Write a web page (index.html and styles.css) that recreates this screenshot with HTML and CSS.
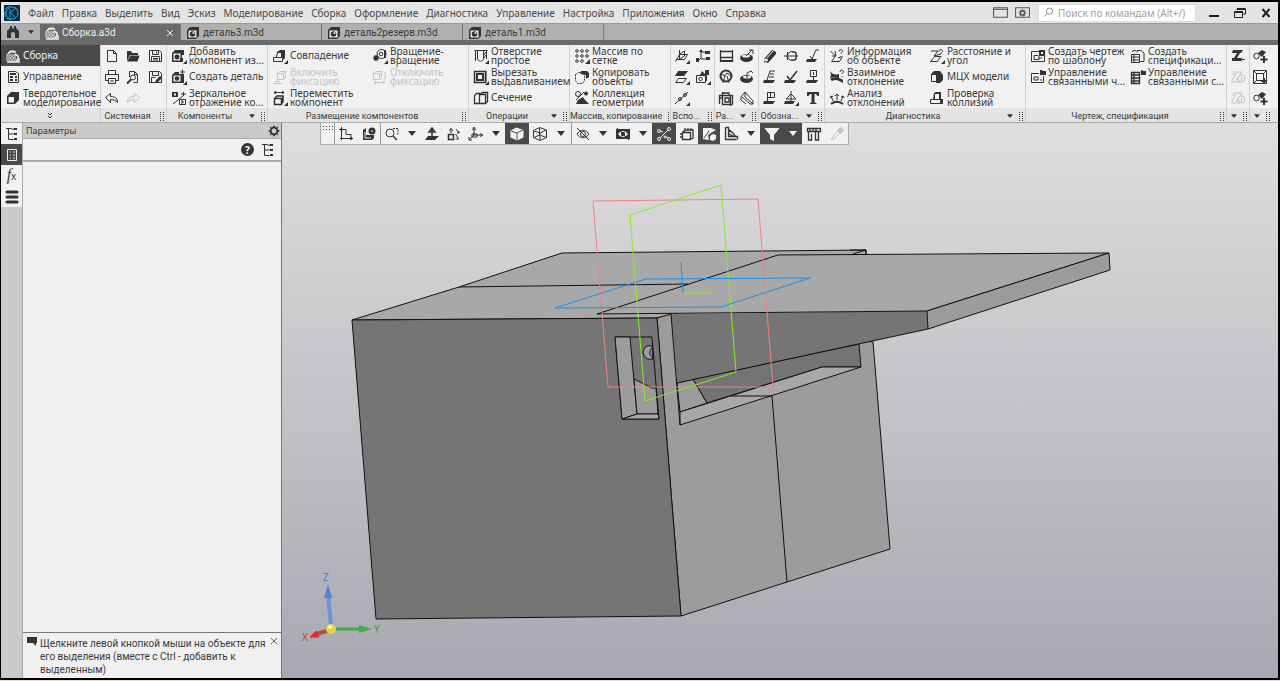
FILE: index.html
```html
<!DOCTYPE html>
<html lang="ru">
<head>
<meta charset="utf-8">
<title>Сборка.a3d</title>
<link rel="stylesheet" href="styles.css">
</head>
<body>
<svg class="defs" aria-hidden="true">
<defs>
<symbol id="asm" viewBox="0 0 16 16"><path d="M2 13V7L5 3h5l1 2"/><path d="M4 13V7h6v6z"/><circle cx="7" cy="10" r="1.5"/><path d="M10 6l3 2v3h1v3H2M12 11v3M3 6l2-2h5" stroke-width="1.6"/></symbol>
<symbol id="part" viewBox="0 0 16 16"><path d="M2 5l3-3h9v9l-3 3H2z" class="f"/><path d="M3.500 5.500h8v7h-8z" class="w"/><circle cx="7.500" cy="9" r="2.800" class="f"/><circle cx="8.500" cy="8" r="1" class="w"/></symbol>
<symbol id="home" viewBox="0 0 16 16"><path d="M2 14V7l3-3V2h2v2l1 1 1-1V2h2v2l3 3v7h-4v-4a2 2 0 0 0-4 0v4z" class="f"/></symbol>
<symbol id="sheet" viewBox="0 0 16 16"><path d="M3.500 2.500h7l3 2v9h-10z"/><path d="M5 5h6M5 8h3m2 0h2M5 11h3m2 0h2" stroke-width="2"/></symbol>
<symbol id="solid" viewBox="0 0 16 16"><path d="M2 6l4-4h8v8l-4 4H2z" class="f"/><path d="M3.500 7h5.500v5.500H3.500z" class="w"/></symbol>
<symbol id="new" viewBox="0 0 16 16"><path d="M3.500 2.500h6l3 3v8h-9zM9.500 2.500v3h3"/></symbol>
<symbol id="open" viewBox="0 0 16 16"><path d="M2 13V3h4l1 2h6v2H5z" class="f"/><path d="M5.500 7.500h9l-2 6H2z" class="f"/></symbol>
<symbol id="save" viewBox="0 0 16 16"><path d="M2.500 2.500h10l2 2v9h-12zM5.500 2.500v4h6v-4M4.500 13.500v-5h8v5M6 10.500h5M6 12h5M9.500 3.500v2"/></symbol>
<symbol id="saveas" viewBox="0 0 16 16"><path d="M2.500 2.500h10l2 2v9h-12zM5.500 2.500v4h6v-4M4.500 13.500v-5h4"/><path d="M8 14l1-3 4-4 2 2-4 4z" class="f"/></symbol>
<symbol id="print" viewBox="0 0 16 16"><path d="M4.500 5.500v-4h7v4M4.500 11.500h-3v-6h13v6h-3M4.500 9.500h7v5h-7zM6 12h4"/></symbol>
<symbol id="preview" viewBox="0 0 16 16"><path d="M4.500 8V2.500h5l3 3v8h-4M9.500 2.500v3h3"/><circle cx="8" cy="8.500" r="2.500"/><path d="M6 10.500l-4 4" stroke-width="2"/></symbol>
<symbol id="undo" viewBox="0 0 16 16"><path d="M1.500 7.500l5-4v3c5 0 7 2 7 6-1.500-2-3.500-3-7-3v3z"/></symbol>
<symbol id="redo" viewBox="0 0 16 16"><path d="M14.500 7.500l-5-4v3c-5 0-7 2-7 6 1.500-2 3.500-3 7-3v3z"/></symbol>
<symbol id="addc" viewBox="0 0 16 16"><path d="M1 5l3-3h9v5h-2v7H1z" class="f"/><path d="M2.500 5.500h7v7h-7z" class="w"/><circle cx="6" cy="9" r="2.500" class="f"/><path d="M9 10h3v4H9z" class="f"/><path d="M16 16h-4l4-4z" class="f"/></symbol>
<symbol id="newp" viewBox="0 0 16 16"><path d="M1 6l3-3h4v2h5v9H1z" class="f"/><path d="M2.500 6.500h7v6h-7z" class="w"/><circle cx="6" cy="9.500" r="2.300" class="f"/><path d="M9 3h5M11.500 0.500v5"/><path d="M16 16h-4l4-4z" class="f"/></symbol>
<symbol id="mirror" viewBox="0 0 16 16"><path d="M1 2h6v5H1z" class="f"/><path d="M3 3.500h2v2H3z" class="w"/><path d="M10 4h5M12.500 2v4M2 14L12 6M8.500 9.500h6v5h-6zM10 11h2v2h-2"/></symbol>
<symbol id="coin" viewBox="0 0 16 16"><path d="M1.500 9.500h9v4h-9z"/><path d="M4 9l1-5 3-2h5v8l-2 2V9z" class="f"/><path d="M6 5h3v4H5z" class="w"/><path d="M16 16h-4l4-4z" class="f"/></symbol>
<symbol id="fix" viewBox="0 0 16 16"><path d="M5.500 4.500l2-2h6v6l-2 2h-6zM5.500 4.500h6v6M11.500 4.500l2-2M1 14.500h9M3 12.500h5M5 10.500v2"/></symbol>
<symbol id="unfix" viewBox="0 0 16 16"><path d="M1.500 4.500l2-2h6v6l-2 2h-6zM1.500 4.500h6v6M12 2.500c2 2 2 5 0 8M3 13.500h9M4 12l-2 1.500L4 15M11 12l2 1.500-2 1.500"/></symbol>
<symbol id="move" viewBox="0 0 16 16"><path d="M2 2.500h10M4 1L2 2.500 4 4M10 1l2 1.500L10 4"/><path d="M2.500 8.500h7v6h-7zM3 8l2-2h6v6l-2 2" stroke-width="1.500"/><path d="M16 16h-4l4-4z" class="f"/></symbol>
<symbol id="rot" viewBox="0 0 16 16"><circle cx="9.500" cy="6" r="4.500"/><circle cx="9" cy="6" r="1.800"/><circle cx="4" cy="10" r="2.700" class="f"/><path d="M13 2v8" stroke-width="2"/><path d="M16 16h-4l4-4z" class="f"/></symbol>
<symbol id="hole" viewBox="0 0 16 16"><path d="M1.500 2.500h13M4.500 2.500v9l3 2 3-2v-9M2.500 3v10M3 5l-1 2m1 2l-1 2M13.500 3v8M11 7l2-3m-2 6l2-3"/><path d="M16 16h-4l4-4z" class="f"/></symbol>
<symbol id="cut" viewBox="0 0 16 16"><path d="M1.500 2.500h11v11h-11z" stroke-width="1.500"/><path d="M4 5h6v6H4z" stroke-width="2"/><path d="M13 2v11"/><path d="M16 16h-4l4-4z" class="f"/></symbol>
<symbol id="sect" viewBox="0 0 16 16"><path d="M1.500 5.500l2-2h3v10h-5zM6.500 4.500l3-2h5v9l-2 2h-6M7 4.500h5.500v9" stroke-width="1.300"/></symbol>
<symbol id="grid" viewBox="0 0 16 16"><circle cx="3" cy="3" r="1.300"/><circle cx="8" cy="3" r="1.300"/><circle cx="13" cy="3" r="1.300"/><circle cx="3" cy="8" r="1.300"/><circle cx="8" cy="8" r="1.300"/><circle cx="13" cy="8" r="1.300"/><circle cx="3" cy="13" r="1.300"/><circle cx="8" cy="13" r="1.300"/><path d="M16 16h-5l5-5z" class="f"/></symbol>
<symbol id="copy" viewBox="0 0 16 16"><path d="M6 5l1-3h6l2 2v4l-3 2V6z" class="f"/><path d="M1.500 5.500l3-2h5l1 3v5l-2 3h-5l-2-3z" stroke-dasharray="2 1"/></symbol>
<symbol id="coll" viewBox="0 0 16 16"><circle cx="4" cy="4" r="2.500"/><circle cx="12" cy="3.500" r="2" class="f"/><path d="M2 14l2-4 5-3 2 3 4 4z" class="f"/><path d="M2 10l8-8"/></symbol>
<symbol id="plane3" viewBox="0 0 16 16"><path d="M1.500 13.500l4-7h8l-3 5H2M5.500 2v9l5-3V3l-5 3"/><path d="M16 16h-4l4-4z" class="f"/></symbol>
<symbol id="lcs" viewBox="0 0 16 16"><path d="M6 2v9h5M3 13l3-3M6 4h4"/><path d="M10 3h5v3h-5zM11 9h4v3h-4zM1 10h3v4H1z" class="f"/><path d="M4 4l2-3 2 3z" class="f"/></symbol>
<symbol id="planes" viewBox="0 0 16 16"><path d="M4 2h10l-4 5H1z" class="f"/><path d="M4.500 9.500h8l-3 4h-8z"/><path d="M16 16h-4l4-4z" class="f"/></symbol>
<symbol id="shapes" viewBox="0 0 16 16"><path d="M1.500 6.500h9v7h-9z"/><circle cx="5.500" cy="10" r="1.700"/><path d="M5 6l2-4 3 3V1h4v5h-2v6h-1V6z" class="f"/><path d="M16 16h-4l4-4z" class="f"/></symbol>
<symbol id="axis" viewBox="0 0 16 16"><path d="M1 14L14 2"/><circle cx="6" cy="9" r="1.500"/><circle cx="11" cy="5" r="1.500"/><path d="M16 16h-4l4-4z" class="f"/></symbol>
<symbol id="dim" viewBox="0 0 16 16"><path d="M2.500 2v12M14.500 2v12M2.500 3.500h12M3 9.500h11" stroke-width="1.300"/><path d="M2 13h12" stroke-width="2"/></symbol>
<symbol id="disc" viewBox="0 0 16 16"><ellipse cx="7.500" cy="10" rx="6.500" ry="4" class="f"/><ellipse cx="7" cy="8" rx="4" ry="1.500" class="w"/><path d="M7 8l6-6M10 2h4v4"/></symbol>
<symbol id="face" viewBox="0 0 16 16"><circle cx="8" cy="7" r="5.500" stroke-width="2"/><path d="M3 5l4 2 2-3 4 3M5 14l2-7m4 7L9 7"/></symbol>
<symbol id="disc2" viewBox="0 0 16 16"><ellipse cx="7.500" cy="10" rx="6.500" ry="4" class="f"/><ellipse cx="8" cy="8" rx="4" ry="1.500" class="w"/><path d="M8 9V4l4-2 2 2"/></symbol>
<symbol id="hatch" viewBox="0 0 16 16"><path d="M1 5.500h13.500v9M4.500 2v12.500h10M12.500 5v11M5 3h6v2M7 8h4v4H7zM2 8h3M1.500 5v9" stroke-width="1.300"/></symbol>
<symbol id="angle" viewBox="0 0 16 16"><path d="M2 7l4-5 8 9v3h-3L3 7M6 3v4l8 7M2 7v3l5 4"/></symbol>
<symbol id="rod" viewBox="0 0 16 16"><path d="M2 11l8-9 4 2v2l-8 9-4-1z" class="f"/><path d="M5 10l6-7" class="wl"/><ellipse cx="4" cy="12" rx="2" ry="1.500" class="w"/></symbol>
<symbol id="target" viewBox="0 0 16 16"><circle cx="9" cy="8" r="4.500"/><path d="M1 8h14M4.500 4v8M9 4h4v8H8"/><path d="M3 8l2-2v4z" class="f"/></symbol>
<symbol id="rough" viewBox="0 0 16 16"><path d="M2 11h10l-2 3H1z" class="f"/><path d="M5 8l2 3 4-9h3"/></symbol>
<symbol id="base" viewBox="0 0 16 16"><path d="M2 11h11l-2 3H1z" class="f"/><path d="M5 11l3-9h5M8 5h4M7 8h5"/></symbol>
<symbol id="mark" viewBox="0 0 16 16"><path d="M2 11h11l-2 3H1z" class="f"/><path d="M4 7l3 4 7-9" stroke-width="1.500"/></symbol>
<symbol id="stamp" viewBox="0 0 16 16"><path d="M2 11h11l-2 3H1z" class="f"/><path d="M5.500 1.500h6v6h-6zM8.500 3v3M8.500 8v4"/></symbol>
<symbol id="flag" viewBox="0 0 16 16"><path d="M2 11h11l-2 3H1z" class="f"/><path d="M5.500 11V2.500h7v5h-7M8.500 3v4"/></symbol>
<symbol id="tri" viewBox="0 0 16 16"><path d="M2 11h10l-2 3H1z" class="f"/><path d="M8 1v4m-5 4l5-5 5 5zM8 5v6"/><path d="M16 16h-4l4-4z" class="f"/></symbol>
<symbol id="textt" viewBox="0 0 16 16"><path d="M2 2h12v4h-1.500L11 4H9.500v8.500l2 .5v1H5v-1l1.500-.5V4H5L3.500 6H2z" class="f"/></symbol>
<symbol id="info" viewBox="0 0 16 16"><path d="M1.500 3l5 5-4 5.500h8l3-5M6 3l1 5H3M10 3.500c0-3 4-2 3.500 0-.3 1-1.500 1-1.500 2.500M12 8v1M9 10l3-1"/></symbol>
<symbol id="devi" viewBox="0 0 16 16"><path d="M1 2c3 4 5 4 9 3v4c-3-1-5-1-9 0l1-3zM1 14c3-4 7-4 13 0v-3C9 8 5 8 1 10l2 2z" class="f"/><path d="M11 3c0-3 4-2 3.500 0-.3 1-1.500 1-1.500 2M13 7v1"/></symbol>
<symbol id="anal" viewBox="0 0 16 16"><path d="M2 14c4-3 8-3 12 0" stroke-width="2"/><path d="M8 10V4M4 11L2 6m10 5l2-5M6 6l2-2 2 2M1 8l1-2 2 1m8 0l2-1 1 2"/></symbol>
<symbol id="dist" viewBox="0 0 16 16"><path d="M2 3h7L5 8l7-2M1.500 13.500l4-5h6l-3 5zM10 3.500c0-3 4-2 3.500 0-.3 1-1.500 1-1.500 2.500M12 8v1"/><path d="M16 16h-4l4-4z" class="f"/></symbol>
<symbol id="mass" viewBox="0 0 16 16"><path d="M2 5l3-3h6l3 4v5l-3 3H7V8H2z" class="f"/><path d="M2.500 5.500h5v7h-5z" class="w"/><path d="M2.500 5.500h5v7h-5z"/></symbol>
<symbol id="colli" viewBox="0 0 16 16"><path d="M4 9l1-6 2-1h5v7h2v5H4z" class="f"/><path d="M6 4h4v5H6zM2 10h9v3H2z" class="w"/><path d="M1.500 9.500h10v4h-10z"/></symbol>
<symbol id="draw" viewBox="0 0 16 16"><path d="M1.500 3.500h13v10h-13zM4 7.500h4M4 7.500v4h5v-4M8.500 10H12"/><path d="M9 2h6v6H9z" class="f"/><path d="M11 4h2v2h-2z" class="w"/></symbol>
<symbol id="drawm" viewBox="0 0 16 16"><path d="M9 4.500H1.500v9h12V7M4 8h4v3H4zM10 11h2"/><path d="M10 1h2l1 1h3v4h-6z" class="f"/></symbol>
<symbol id="spec" viewBox="0 0 16 16"><path d="M7 4.500V2.500h4l3 2.500v8.500h-4M1.500 6.500h8v8h-8zM1.500 9h8M1.500 12h8M4 6v8M2 4c1-2 3-2 4-1"/></symbol>
<symbol id="specm" viewBox="0 0 16 16"><path d="M1.500 3.500h8v11h-8zM1.500 6h8M1.500 9h8M1.500 12h8M4 4v10" stroke-width="1.400"/><path d="M11 1h1l1 1h3v4h-5z" class="f"/></symbol>
<symbol id="zed" viewBox="0 0 16 16"><path d="M3 2h10l-2 3h-1L7 10h4v3H2v-3h2l3-5H2z" class="f"/><path d="M10 11.500h5M12 9.500l-2 2 2 2"/></symbol>
<symbol id="zedi" viewBox="0 0 16 16"><path d="M3 3h9l-2 3-4 5h3M2 5h4l-4 6v2h8"/><circle cx="11.500" cy="9.500" r="3.500"/><path d="M11.500 8v4"/></symbol>
<symbol id="addtool" viewBox="0 0 16 16"><path d="M6 5l4-3 4 2-4 5z" class="f"/><circle cx="4.500" cy="8" r="2.800"/><path d="M12 8v7M8.500 11.500h7" stroke-width="2"/></symbol>
<symbol id="frame" viewBox="0 0 16 16"><path d="M1.500 1.500h13v13h-13zM4.500 4.500h7v7h-7zM2 2l3 3m6 0l3-3M2 14l3-3"/><path d="M12 9v6M9 12h6" stroke-width="2"/></symbol>
<symbol id="tree" viewBox="0 0 16 16"><path d="M2 2.500h5M4.500 3v10.500h5M4.500 8h5"/><path d="M10 2h3v2h-3zM10 7h3v2h-3zM10 12h3v2h-3z" class="f"/><path d="M7 3h3"/></symbol>
<symbol id="list" viewBox="0 0 16 16"><path d="M3.500 2.500h9v11h-9zM6 5h1m2 0h2M6 8h1m2 0h2M6 11h1m2 0h2"/></symbol>
<symbol id="bars" viewBox="0 0 16 16"><path d="M3 3h10M3 8h10M3 13h10" stroke-width="3" stroke-linecap="round"/></symbol>
<symbol id="gear" viewBox="0 0 16 16"><circle cx="8" cy="8" r="4.500" stroke-width="2.500"/><path d="M8 1v2m0 10v2M1 8h2m10 0h2M3 3l1 1m8 8l1 1M13 3l-1 1m-8 8l-1 1" stroke-width="2.500"/></symbol>
<symbol id="sketch" viewBox="0 0 16 16"><path d="M3.500 1v13M1 3.500h7v5h5v5M2 12.500h13"/><circle cx="3.500" cy="3.500" r="1"/><circle cx="13" cy="12.500" r="1"/></symbol>
<symbol id="body" viewBox="0 0 16 16"><path d="M2 4l3-2v7h8v3l-2 2H2z" class="f"/><path d="M4 6v6h6" class="wl"/><circle cx="11" cy="5" r="3.500" class="f"/><path d="M10 5h2" class="wl"/></symbol>
<symbol id="zoomr" viewBox="0 0 16 16"><circle cx="6" cy="7" r="4"/><path d="M9 10l4 4" stroke-width="1.500"/><path d="M9 2.500h5v7" stroke-dasharray="2 1"/></symbol>
<symbol id="normal" viewBox="0 0 16 16"><path d="M4 10h11l-4 4H1z" class="f"/><path d="M8 12V3M5 6l3-4 3 4z" stroke-width="1.500"/></symbol>
<symbol id="turn" viewBox="0 0 16 16"><path d="M2.500 8.500h5v5h-5z" stroke-width="1.500"/><path d="M5 7V2.500L3.500 5M5 2.500L7 5M10 3l3 4m0 0V5m0 2h-2M9.500 8l3 5h-3"/></symbol>
<symbol id="axes" viewBox="0 0 16 16"><path d="M6 9V2M4.500 4L6 1l1.500 3M6 9h8M12 7.500L15 9l-3 1.500M6 9l-5 5M1 11v3h3"/><path d="M4 8h5v3H4z"/></symbol>
<symbol id="cube" viewBox="0 0 16 16"><path d="M1.500 4.500l6-3 7 2.500v7.500l-6.500 3-6.500-3z" class="f"/><path d="M2 5l6 2 6-3M8 7v7" class="dl"/></symbol>
<symbol id="wire" viewBox="0 0 16 16"><path d="M1.500 4.500l6-3 7 2.500v7.500l-6.500 3-6.500-3zM2 5l6 2 6-3M8 7v7M7.500 2v7L2 11.500M7.500 9l7 2.500"/></symbol>
<symbol id="eye" viewBox="0 0 16 16"><path d="M2 8c3-5 9-5 12 0-3 5-9 5-12 0zM2 2l12 12"/><circle cx="8" cy="8" r="2.500"/></symbol>
<symbol id="cam" viewBox="0 0 16 16"><path d="M1 3h14v10H1z" class="f"/><path d="M3 8c3-4 7-4 10 0-3 4-7 4-10 0z" class="w"/><circle cx="8" cy="8" r="2.200" class="f"/><path d="M2 2l12 12"/></symbol>
<symbol id="pts" viewBox="0 0 16 16"><path d="M4 12l8-8"/><circle cx="3" cy="5" r="1.500"/><circle cx="13" cy="3" r="1.500"/><circle cx="3" cy="13" r="1.500"/><circle cx="9" cy="11" r="1"/><circle cx="13" cy="13" r="1.500"/><path d="M4 5l3 1m3 5l2 1"/></symbol>
<symbol id="box" viewBox="0 0 16 16"><path d="M3.500 6.500h8v7h-8zM4 6l2-2h8v8l-2 1M1 8h2M1 11h2M6 4V2m3 2V2m3 2V2" stroke-width="1.300"/></symbol>
<symbol id="sel" viewBox="0 0 16 16"><path d="M2 2h8l5 2-5 3-3 2 1 5-6-1z" class="f"/><path d="M3 12l5-7" class="dl"/><path d="M9 10l3-2 3 1v4l-3 2-3-1z" class="f"/></symbol>
<symbol id="layers" viewBox="0 0 16 16"><path d="M2.500 1.500v12h11M2.500 1.500h3v9h9v3M5 5l4 1 4 5M6 8l4 2M5 3l4 3" stroke-width="1.300"/></symbol>
<symbol id="funnel" viewBox="0 0 16 16"><path d="M1 2h14v1L10 9v6l-4-2V9L1 3z" class="f"/></symbol>
<symbol id="cali" viewBox="0 0 16 16"><path d="M1.500 2.500h13v3h-13zM4 3v2m3-2v2m3-2v2M2.500 6v8h3V8M9.500 6v8h3V6" stroke-width="1.300"/></symbol>
<symbol id="pick" viewBox="0 0 16 16"><path d="M2 14l2-4 5-5 2 2-5 5z"/><path d="M8 4l4-3 3 3-3 4z" class="f"/></symbol>
<symbol id="mag" viewBox="0 0 16 16"><circle cx="9.500" cy="6" r="4.500" stroke-width="1.400"/><path d="M7 9l-5 5" stroke-width="1.400"/></symbol>
<symbol id="grip" viewBox="0 0 4 9"><path d="M0 0h1v1H0zm3 0h1v1H3zM0 2h1v1H0zm3 0h1v1H3zM0 4h1v1H0zm3 0h1v1H3zM0 6h1v1H0zm3 0h1v1H3zM0 8h1v1H0zm3 0h1v1H3z" class="f"/></symbol>
<symbol id="down" viewBox="0 0 8 5"><path d="M0 0h8L4 5z" class="f"/></symbol>
</defs>
</svg>

<div class="app">
<header class="menubar">
  <svg class="logo" viewBox="0 0 16 16"><path d="M0 0h16v16H0z" fill="#082b42"/><circle cx="8" cy="8" r="6" fill="none" stroke="#2aa5dc"/><path d="M1 4l5-3M1 12V7l4-4M6 4v8M6 8l6-5M7 8l5 5M2 13l5 2M11 2l3 4" stroke="#2aa5dc" fill="none"/></svg>
  <nav class="menus"><button>Файл</button><button>Правка</button><button>Выделить</button><button>Вид</button><button>Эскиз</button><button>Моделирование</button><button>Сборка</button><button>Оформление</button><button>Диагностика</button><button>Управление</button><button>Настройка</button><button>Приложения</button><button>Окно</button><button>Справка</button></nav>
  <button class="wbtn" aria-label="Макет окна"><svg class="wi" viewBox="0 0 16 14"><path d="M1.500 2.500h13v9h-13z"/><path d="M1 4h14"/></svg></button>
  <button class="wbtn" aria-label="Настройка интерфейса"><svg class="wi" viewBox="0 0 16 14"><path d="M1.500 2.500h13v9h-13z"/><circle cx="8" cy="7.500" r="2" stroke-width="1.500"/><path d="M8 4v1m0 5v1M4.500 7.500h1m5 0h1M5.500 5l1 1m3 3l1 1m0-5l-1 1m-3 3l-1 1"/></svg></button>
  <label class="search"><svg class="mg"><use href="#mag"/></svg><input type="text" placeholder="Поиск по командам (Alt+/)" aria-label="Поиск по командам"></label>
  <div class="winctl">
    <button aria-label="Свернуть"><svg viewBox="0 0 12 12"><path d="M1 9h10" stroke-width="2"/></svg></button>
    <button aria-label="Восстановить"><svg viewBox="0 0 12 12"><path d="M3 3V1.500h8.500V7H9M.5 4.500h8v6h-8z"/><path d="M3 2h8M1 5h8" stroke-width="2"/></svg></button>
    <button aria-label="Закрыть"><svg viewBox="0 0 12 12"><path d="M2.500 2l7 8m0-8l-7 8" stroke-width="2"/></svg></button>
  </div>
</header>

<div class="tabs">
  <button class="home" aria-label="Главная"><svg class="ic"><use href="#home"/></svg><svg class="dn"><use href="#down"/></svg></button>
  <button class="tab on"><svg class="ic"><use href="#asm"/></svg><span>Сборка.a3d</span><svg class="x" viewBox="0 0 8 8"><path d="M1 1l6 6m0-6L1 7"/></svg></button>
  <button class="tab"><svg class="ic"><use href="#part"/></svg><span>деталь3.m3d</span></button>
  <button class="tab"><svg class="ic"><use href="#part"/></svg><span>деталь2резерв.m3d</span></button>
  <button class="tab"><svg class="ic"><use href="#part"/></svg><span>деталь1.m3d</span></button>
</div>

<div class="ribbon">
  <section class="group modes"><div class="body"><button class="cmd on"><svg class="ic"><use href="#asm"/></svg><span>Сборка</span></button><button class="cmd"><svg class="ic"><use href="#sheet"/></svg><span>Управление</span></button><button class="cmd"><svg class="ic"><use href="#solid"/></svg><span>Твердотельное<br>моделирование</span></button></div><footer><svg class="chev" viewBox="0 0 6 6"><path d="M1 0l2 2 2-2M1 3l2 2 2-2"/></svg></footer></section>

  <section class="group"><div class="body c3"><button class="tool" aria-label="Создать"><svg class="ic"><use href="#new"/></svg></button><button class="tool" aria-label="Открыть"><svg class="ic"><use href="#open"/></svg></button><button class="tool" aria-label="Сохранить"><svg class="ic"><use href="#save"/></svg></button><button class="tool" aria-label="Печать"><svg class="ic"><use href="#print"/></svg></button><button class="tool" aria-label="Просмотр"><svg class="ic"><use href="#preview"/></svg></button><button class="tool" aria-label="Сохранить как"><svg class="ic"><use href="#saveas"/></svg></button><button class="tool" aria-label="Отменить"><svg class="ic"><use href="#undo"/></svg></button><button class="tool" aria-label="Повторить" disabled><svg class="ic"><use href="#redo"/></svg></button></div><footer><span>Системная</span><svg class="grip"><use href="#grip"/></svg></footer></section>

  <section class="group"><div class="body"><button class="cmd"><svg class="ic"><use href="#addc"/></svg><span>Добавить<br>компонент из...</span></button><button class="cmd"><svg class="ic"><use href="#newp"/></svg><span>Создать деталь</span></button><button class="cmd"><svg class="ic"><use href="#mirror"/></svg><span>Зеркальное<br>отражение ко...</span></button></div><footer><span>Компоненты</span><svg class="dn"><use href="#down"/></svg><svg class="grip"><use href="#grip"/></svg></footer></section>

  <section class="group"><div class="body c2"><button class="cmd"><svg class="ic"><use href="#coin"/></svg><span>Совпадение</span></button><button class="cmd"><svg class="ic"><use href="#rot"/></svg><span>Вращение-<br>вращение</span></button><button class="cmd" disabled><svg class="ic"><use href="#fix"/></svg><span>Включить<br>фиксацию</span></button><button class="cmd" disabled><svg class="ic"><use href="#unfix"/></svg><span>Отключить<br>фиксацию</span></button><button class="cmd"><svg class="ic"><use href="#move"/></svg><span>Переместить<br>компонент</span></button></div><footer><span>Размещение компонентов</span><svg class="grip"><use href="#grip"/></svg></footer></section>

  <section class="group"><div class="body"><button class="cmd"><svg class="ic"><use href="#hole"/></svg><span>Отверстие<br>простое</span></button><button class="cmd"><svg class="ic"><use href="#cut"/></svg><span>Вырезать<br>выдавливанием</span></button><button class="cmd"><svg class="ic"><use href="#sect"/></svg><span>Сечение</span></button></div><footer><span>Операции</span><svg class="dn"><use href="#down"/></svg><svg class="grip"><use href="#grip"/></svg></footer></section>

  <section class="group"><div class="body"><button class="cmd"><svg class="ic"><use href="#grid"/></svg><span>Массив по<br>сетке</span></button><button class="cmd"><svg class="ic"><use href="#copy"/></svg><span>Копировать<br>объекты</span></button><button class="cmd"><svg class="ic"><use href="#coll"/></svg><span>Коллекция<br>геометрии</span></button></div><footer><span>Массив, копирование</span><svg class="grip"><use href="#grip"/></svg></footer></section>

  <section class="group"><div class="body c2"><button class="tool" aria-label="Плоскость"><svg class="ic"><use href="#plane3"/></svg></button><button class="tool" aria-label="Система координат"><svg class="ic"><use href="#lcs"/></svg></button><button class="tool" aria-label="Смещённая плоскость"><svg class="ic"><use href="#planes"/></svg></button><button class="tool" aria-label="Контрольные точки"><svg class="ic"><use href="#shapes"/></svg></button><button class="tool" aria-label="Ось"><svg class="ic"><use href="#axis"/></svg></button></div><footer><span>Вспо...</span><svg class="grip"><use href="#grip"/></svg></footer></section>

  <section class="group"><div class="body c2"><button class="tool" aria-label="Линейный размер"><svg class="ic"><use href="#dim"/></svg></button><button class="tool" aria-label="Диаметр"><svg class="ic"><use href="#disc"/></svg></button><button class="tool" aria-label="Угловой размер"><svg class="ic"><use href="#face"/></svg></button><button class="tool" aria-label="Радиус"><svg class="ic"><use href="#disc2"/></svg></button><button class="tool" aria-label="Авторазмер"><svg class="ic"><use href="#hatch"/></svg></button><button class="tool" aria-label="Размер ребра"><svg class="ic"><use href="#angle"/></svg></button></div><footer><span>Ра...</span><svg class="dn"><use href="#down"/></svg><svg class="grip"><use href="#grip"/></svg></footer></section>

  <section class="group"><div class="body c3"><button class="tool" aria-label="Резьба"><svg class="ic"><use href="#rod"/></svg></button><button class="tool" aria-label="Осевая"><svg class="ic"><use href="#target"/></svg></button><button class="tool" aria-label="Шероховатость"><svg class="ic"><use href="#rough"/></svg></button><button class="tool" aria-label="База"><svg class="ic"><use href="#base"/></svg></button><button class="tool" aria-label="Клеймение"><svg class="ic"><use href="#mark"/></svg></button><button class="tool" aria-label="Маркировка"><svg class="ic"><use href="#stamp"/></svg></button><button class="tool" aria-label="Допуск формы"><svg class="ic"><use href="#flag"/></svg></button><button class="tool" aria-label="Выноска"><svg class="ic"><use href="#tri"/></svg></button><button class="tool" aria-label="Надпись"><svg class="ic"><use href="#textt"/></svg></button></div><footer><span>Обозна...</span><svg class="dn"><use href="#down"/></svg><svg class="grip"><use href="#grip"/></svg></footer></section>

  <section class="group"><div class="body c2"><button class="cmd"><svg class="ic"><use href="#info"/></svg><span>Информация<br>об объекте</span></button><button class="cmd"><svg class="ic"><use href="#dist"/></svg><span>Расстояние и<br>угол</span></button><button class="cmd"><svg class="ic"><use href="#devi"/></svg><span>Взаимное<br>отклонение</span></button><button class="cmd"><svg class="ic"><use href="#mass"/></svg><span>МЦХ модели</span></button><button class="cmd"><svg class="ic"><use href="#anal"/></svg><span>Анализ<br>отклонений</span></button><button class="cmd"><svg class="ic"><use href="#colli"/></svg><span>Проверка<br>коллизий</span></button></div><footer><span>Диагностика</span><svg class="dn"><use href="#down"/></svg><svg class="grip"><use href="#grip"/></svg></footer></section>

  <section class="group"><div class="body c2"><button class="cmd"><svg class="ic"><use href="#draw"/></svg><span>Создать чертеж<br>по шаблону</span></button><button class="cmd"><svg class="ic"><use href="#spec"/></svg><span>Создать<br>спецификаци...</span></button><button class="cmd"><svg class="ic"><use href="#drawm"/></svg><span>Управление<br>связанными ч...</span></button><button class="cmd"><svg class="ic"><use href="#specm"/></svg><span>Управление<br>связанными с...</span></button></div><footer><span>Чертеж, спецификация</span><svg class="grip"><use href="#grip"/></svg></footer></section>

  <section class="group"><div class="body"><button class="tool" aria-label="Изменить размер"><svg class="ic"><use href="#zed"/></svg></button><button class="tool" aria-label="Сведения" disabled><svg class="ic"><use href="#zedi"/></svg></button><button class="tool" aria-label="Обновить" disabled><svg class="ic"><use href="#zedi"/></svg></button></div><footer><svg class="dn"><use href="#down"/></svg><svg class="grip"><use href="#grip"/></svg></footer></section>

  <section class="group last"><div class="body"><button class="tool" aria-label="Добавить элемент"><svg class="ic"><use href="#addtool"/></svg></button><button class="tool" aria-label="Добавить рамку"><svg class="ic"><use href="#frame"/></svg></button><button class="tool" aria-label="Добавить тело"><svg class="ic"><use href="#addtool"/></svg></button></div><footer><svg class="dn"><use href="#down"/></svg><svg class="grip"><use href="#grip"/></svg></footer></section>
</div>

<main class="work">
  <nav class="rail"><button aria-label="Дерево"><svg class="ic"><use href="#tree"/></svg></button><button class="on" aria-label="Параметры"><svg class="ic"><use href="#list"/></svg></button><button class="fx" aria-label="Переменные"><i>f</i><span>x</span></button><button aria-label="Слои"><svg class="ic"><use href="#bars"/></svg></button></nav>
  <aside class="panel">
    <div class="phead"><span>Параметры</span><button aria-label="Настройка панели"><svg class="gear"><use href="#gear"/></svg></button></div>
    <div class="pbar"><button class="help" aria-label="Справка">?</button><button aria-label="Дерево построения"><svg class="ic"><use href="#tree"/></svg></button></div>
    <div class="pbody"></div>
    <div class="hint"><svg class="talk" viewBox="0 0 10 9"><path d="M0 0h10v6H9v3L6 6H0z" class="f"/></svg><p>Щелкните левой кнопкой мыши на объекте для его выделения (вместе с Ctrl - добавить к выделенным)</p><button aria-label="Закрыть подсказку"><svg class="x" viewBox="0 0 8 8"><path d="M1 1l6 6m0-6L1 7"/></svg></button></div>
  </aside>
  <div class="view">
    <svg class="scene" viewBox="282 123 996 555" preserveAspectRatio="xMinYMin slice">
      <g class="model">
        <path fill="#a8a8a8" d="M352 320L459 287 562 253 866 250v8L671 315 657 318z"/>
        <path fill="none" d="M459 287L688 284M850 250h16v5M853 254l13-4"/>
        <path fill="#9c9c9c" d="M657 318l14-4 202 28 17 207-209 67z"/>
        <path fill="#757575" d="M352 320l305-2 24 298-305 3z"/>
        <path fill="#9c9c9c" d="M677 383l16-4 14 24-27 9z"/>
        <path fill="#747474" d="M693 379l166-35 2 23h-39l-115 36z"/>
        <path fill="#a8a8a8" d="M680 412l142-45h39L680 425z"/>
        <path fill="#757575" stroke="none" d="M671 314l256-3 1 18-251 54z"/>
        <path fill="none" d="M671 314l9 111M677 383l251-54M731 396h41l15 186"/>
        <path fill="#a8a8a8" d="M597 314l181-59 331-2-182 58z"/>
        <path fill="#9c9c9c" d="M927 311l182-58 1 17-182 59z"/>
        <path fill="#757575" d="M615 337h37l7 82h-37z"/>
        <path fill="#9c9c9c" d="M615 337h15l7 77-15 5z"/>
        <path fill="#9c9c9c" d="M634 379l18 9h4l2 26h-21z"/>
        <path fill="#a8a8a8" d="M637 414h21l1 5h-37z"/>
        <path fill="#9c9c9c" d="M652 346c-5-1-8 1-9 6 1 6 4 8 10 7zM652 348c-3 3-3 7 1 10"/>
      </g>
      <path class="pr" d="M593 201l165-2 15 188H608z"/>
      <path class="pg" d="M630 215l91-30 15 187-91 29z"/>
      <path class="pb" d="M555 308l91-29 164-1-89 29z"/>
      <path class="pb" d="M681 262l2 31"/><path class="pg" d="M683 293h28"/><path class="pr" d="M683 293l-15 5"/>
      <path d="M331 625l-3-30" stroke="#6b93d8" stroke-width="4"/><path d="M328 584l4 14h-8z" fill="#5484d8"/>
      <path d="M334 629h27" stroke="#48a955" stroke-width="3"/><path d="M372 629l-13-4v8z" fill="#3cb24b"/>
      <path d="M329 630l-12 4" stroke="#a94d4d" stroke-width="4"/><path d="M310 637l6-6 3 6z" fill="#dc3038" stroke="#c33"/>
      <circle cx="331" cy="629" r="5" fill="#e5d648"/><circle cx="330" cy="627" r="2" fill="#fffbb0"/>
      <text x="323" y="581" fill="#4d7fd6">Z</text><text x="374" y="633" fill="#37a548">Y</text><text x="302" y="641" fill="#cf3b44">X</text>
    </svg>
    <div class="vtools">
      <span class="handle"><svg viewBox="0 0 10 4"><path d="M0 0h1v1H0zm3 0h1v1H3zm3 0h1v1H6zm3 0h1v1H9zM0 3h1v1H0zm3 0h1v1H3zm3 0h1v1H6zm3 0h1v1H9z" class="f"/></svg></span>
      <button aria-label="Эскиз"><svg class="ic"><use href="#sketch"/></svg></button><button class="sep" aria-label="Тело"><svg class="ic"><use href="#body"/></svg></button>
      <button aria-label="Масштаб"><svg class="ic"><use href="#zoomr"/></svg></button><button class="ar" aria-label="Виды масштаба"><svg class="dn"><use href="#down"/></svg></button>
      <button aria-label="Нормально к"><svg class="ic"><use href="#normal"/></svg></button><button aria-label="Повернуть"><svg class="ic"><use href="#turn"/></svg></button><button aria-label="Ориентация"><svg class="ic"><use href="#axes"/></svg></button><button class="ar" aria-label="Список ориентаций"><svg class="dn"><use href="#down"/></svg></button>
      <button class="on" aria-label="Полутоновое"><svg class="ic"><use href="#cube"/></svg></button><button aria-label="Каркас"><svg class="ic"><use href="#wire"/></svg></button><button class="ar sep" aria-label="Отображение"><svg class="dn"><use href="#down"/></svg></button>
      <button aria-label="Скрыть"><svg class="ic"><use href="#eye"/></svg></button><button class="ar" aria-label="Список скрытия"><svg class="dn"><use href="#down"/></svg></button><button aria-label="Скрыть объекты"><svg class="ic"><use href="#cam"/></svg></button><button class="ar" aria-label="Типы объектов"><svg class="dn"><use href="#down"/></svg></button>
      <button class="on" aria-label="Привязки"><svg class="ic"><use href="#pts"/></svg></button><button aria-label="Габарит"><svg class="ic"><use href="#box"/></svg></button><button class="on" aria-label="Выбор"><svg class="ic"><use href="#sel"/></svg></button><button aria-label="Сечение"><svg class="ic"><use href="#layers"/></svg></button><button class="ar" aria-label="Список сечений"><svg class="dn"><use href="#down"/></svg></button>
      <button class="on" aria-label="Фильтр"><svg class="ic"><use href="#funnel"/></svg></button><button class="on ar" aria-label="Список фильтров"><svg class="dn"><use href="#down"/></svg></button>
      <button class="wide" aria-label="Измерение"><svg class="ic"><use href="#cali"/></svg></button><button disabled aria-label="Пипетка"><svg class="ic"><use href="#pick"/></svg></button>
    </div>
  </div>
</main>
</div>
</body>
</html>
```
FILE: styles.css
```css
* { box-sizing: border-box; }
body {
  margin: 0;
  background: #e4ddd6;
  color: #3a3a3a;
  font: 10px/12px "Noto Sans", "Open Sans", sans-serif;
}
button {
  margin: 0;
  padding: 0;
  border: 0;
  background: none;
  color: inherit;
  font: inherit;
  text-align: left;
  white-space: nowrap;
}
svg { display: block; flex: none; fill: none; stroke: currentColor; }
.defs { position: absolute; width: 0; height: 0; }
.f { fill: currentColor; stroke: none; }
.w { fill: #f1f1f1; stroke: none; }
.wl { stroke: #f1f1f1; }
.dl { stroke: #4a4a4a; }
.ic { width: 16px; height: 16px; color: #333; }
.dn { width: 8px; height: 5px; color: #333; }
.grip { width: 4px; height: 9px; }
.x { width: 8px; height: 8px; }

.app {
  display: flex;
  flex-direction: column;
  height: calc(100vh - 1px);
  border: solid #000;
  border-width: 2px 2px 2px 1px;
}

.menubar { display: flex; align-items: center; height: 21px; padding-left: 3px; background: #e4e4e4; }
.logo { width: 16px; height: 16px; stroke: none; }
.menus { display: flex; flex: 1; gap: 8px; margin-left: 8px; color: #4a4a4a; }
.wbtn { margin-right: 5px; }
.wi { width: 17px; height: 15px; color: #555; }
.search { display: flex; align-items: center; width: 158px; height: 18px; margin-left: 2px; padding: 0 4px; border: 1px solid #ddd; background: #fff; }
.mg { width: 11px; height: 11px; color: #888; }
.search input { flex: 1; min-width: 0; margin-left: 4px; padding: 0; border: 0; outline: 0; background: none; font: inherit; }
.search input::placeholder { color: #a0a0a0; }
.winctl { display: flex; gap: 14px; margin: 0 6px 0 12px; color: #222; }
.winctl svg { width: 12px; height: 12px; }

.tabs { display: flex; height: 22px; border-top: 1px solid #999; border-bottom: 5px solid #6a6a6a; background: #b0b0b0; }
.home { display: flex; align-items: center; gap: 7px; width: 39px; padding-left: 4px; }
.home .dn { width: 6px; height: 4px; }
.tab { display: flex; align-items: center; gap: 2px; width: 141px; padding: 2px 6px 0 4px; border-right: 1px solid #777; font-family: Roboto, sans-serif; }
.tab.on { background: #6a6a6a; color: #eee; }
.tab.on .ic { color: #eee; }
.tab span { flex: 1; }

.ribbon {
  display: grid;
  grid-template-columns: 100fr 66fr 101fr 201fr 101fr 101fr 44fr 44fr 66fr 201fr 201fr 23fr 28fr;
  background: #f1f1f1;
  border-bottom: 1px solid #aaa;
}
.group { display: flex; flex-direction: column; min-width: 0; border-right: 1px solid #d0d0d0; }
.group.last { border-right: 0; }
.last .body, .group.last footer { padding-right: 8px; }
.body { display: grid; grid-template-rows: repeat(3, 21px); }
.c2 { grid-template-columns: 1fr 1fr; }
.c3 { grid-template-columns: 1fr 1fr 1fr; }
.cmd { display: flex; align-items: center; gap: 2px; min-width: 0; padding-left: 4px; line-height: 9px; }
.cmd.on { background: #4a4a4a; color: #f1f1f1; }
.cmd.on .ic { color: #f1f1f1; }
.tool { display: flex; align-items: center; justify-content: center; }
.cmd:disabled, .tool:disabled, .vtools button:disabled { color: #c4c4c4; }
.ribbon :disabled .ic, .vtools :disabled .ic { color: #c4c4c4; }
.group footer { display: flex; align-items: center; gap: 6px; height: 14px; padding: 2px 2px 0 0; background: #e4e4e4; font: 9px/12px Roboto, sans-serif; }
.group footer span { flex: 1; text-align: center; white-space: nowrap; }
.group footer .dn { width: 6px; height: 4px; }
.group footer .dn:first-child { margin-left: auto; }
.chev { width: 6px; height: 6px; margin: 0 auto; }

.work { display: flex; flex: 1; min-height: 0; }
.rail { width: 22px; border-right: 1px solid #aaa; background: #cacaca; }
.rail button { display: flex; align-items: center; justify-content: center; width: 100%; height: 21px; background: #f1f1f1; }
.rail .on { background: #4a4a4a; }
.rail .on .ic { color: #eee; }
.rail .fx { align-items: baseline; }
.fx i { font: italic 16px/20px "Liberation Serif", serif; }

.panel { display: flex; flex-direction: column; width: 259px; border-right: 1px solid #777; background: #f0f0f0; }
.phead { display: flex; align-items: center; justify-content: space-between; height: 16px; padding: 0 1px 0 3px; border-bottom: 1px solid #aaa; background: #cacaca; font-size: 9px; }
.gear { width: 12px; height: 12px; }
.pbar { display: flex; align-items: center; justify-content: flex-end; gap: 6px; height: 23px; padding-right: 5px; border-bottom: 2px solid #aaa; }
.help { width: 13px; height: 13px; border-radius: 50%; background: #333; color: #fff; font-weight: bold; text-align: center; }
.pbody { flex: 1; }
.hint { display: flex; align-items: flex-start; padding: 4px 3px 2px 4px; border-top: 1px solid #777; font-family: Roboto, sans-serif; }
.hint p { flex: 1; margin: 0 0 0 3px; line-height: 13px; }
.talk { width: 10px; height: 9px; color: #333; }
.hint button { color: #666; }

.view { position: relative; flex: 1; min-width: 0; background: linear-gradient(#dedede, #c6c6ca 45%, #a8a8b2); }
.scene { width: 100%; height: 100%; stroke: none; }
.scene text { font: 10px "Noto Sans", sans-serif; }
.model { stroke: #111; stroke-width: 1; stroke-linejoin: round; }
.pr { stroke: #f08080; }
.pg { stroke: #80f020; }
.pb { stroke: #2090e8; }

.vtools { position: absolute; top: 0; left: 38px; display: flex; height: 22px; border: 1px solid #aaa; border-top: 0; background: #f1f1f1; }
.vtools button { display: flex; align-items: center; justify-content: center; width: 22px; }
.vtools .ar { width: 18px; }
.vtools .wide { width: 24px; }
.vtools .on { background: #4a4a4a; }
.vtools .on .ic, .vtools .on .dn { color: #f1f1f1; }
.vtools .sep { width: 24px; border-right: 1px solid #999; }
.vtools .ar.sep { width: 21px; }
.vtools .ar + .on { width: 24px; }
.handle { width: 14px; padding: 3px 2px; border-right: 1px solid #999; }
.handle svg { width: 10px; height: 4px; }
```
